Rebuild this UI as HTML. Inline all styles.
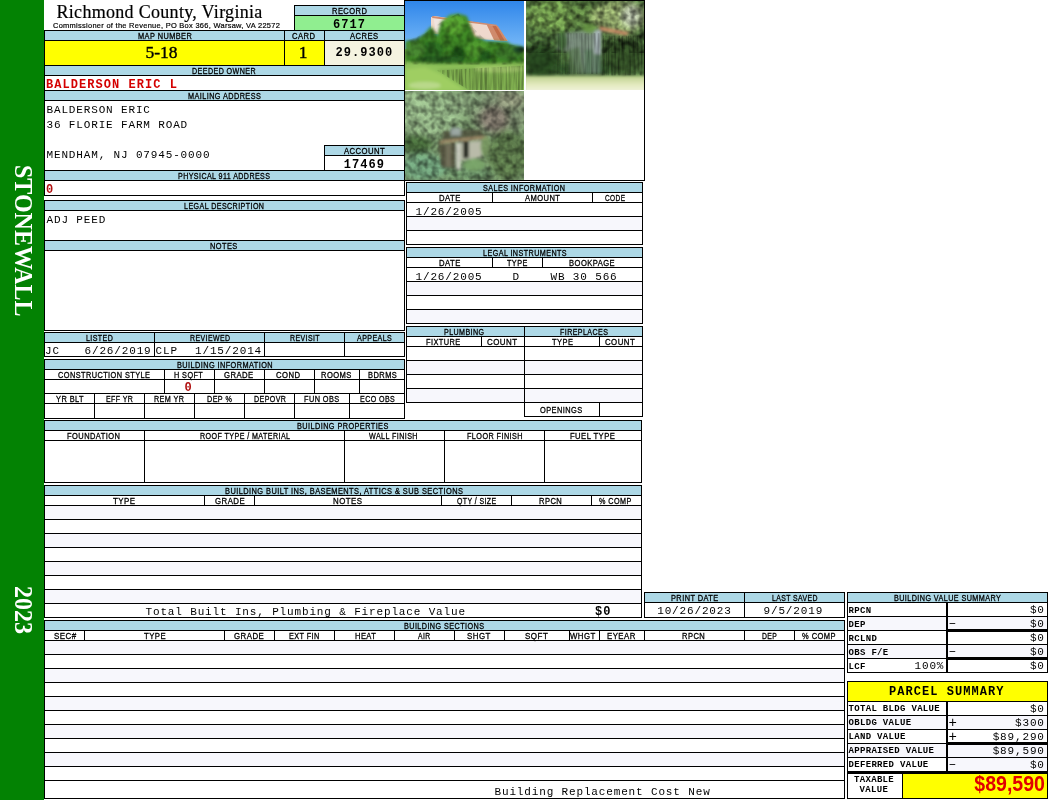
<!DOCTYPE html>
<html lang="en"><head><meta charset="utf-8"><title>Richmond County, Virginia - Property Card</title>
<style>
html,body{margin:0;padding:0;background:#fff;}
body{width:1050px;height:800px;position:relative;overflow:hidden;font-family:"Liberation Sans",sans-serif;}
#card{position:absolute;left:0;top:0;width:1050px;height:800px;will-change:transform;}
.b,.l,.t,.h,.side{position:absolute;}
.l{background:#000;}
.h{font:8.5px/10px "Liberation Sans",sans-serif;color:#000;white-space:pre;letter-spacing:0.5px;transform-origin:0 0;-webkit-text-stroke:0.3px #000;}
.t{white-space:pre;color:#000;}
.m{font:11px/14px "Liberation Mono",monospace;letter-spacing:0.85px;margin-top:2px;margin-left:-0.5px;}
.mb{font:bold 12px/14px "Liberation Mono",monospace;letter-spacing:1.05px;margin-top:2px;}
.sb{font:bold 9px/12px "Liberation Mono",monospace;letter-spacing:0.32px;margin-top:1px;}
.red{color:#d40000;}
.red2{color:#b01010;}
.ttl{font:18px/20px "Liberation Serif",serif;letter-spacing:0.3px;-webkit-text-stroke:0.2px #000;}
.sub{font:8px/10px "Liberation Sans",sans-serif;letter-spacing:0.3px;-webkit-text-stroke:0.2px #000;transform-origin:0 0;transform:scaleX(0.933);}
.big{font:17.5px/25px "Liberation Serif",serif;-webkit-text-stroke:0.4px #000;}
.tv{font:bold 21.5px/25px "Liberation Sans",sans-serif;color:#e00000;transform-origin:100% 0;transform:scaleX(0.91);}
.side{transform-origin:0 0;transform:scaleY(0.96);font:bold 25px/22px "Liberation Serif",serif;color:#fff;writing-mode:vertical-rl;white-space:nowrap;width:22px;}
</style></head>
<body>
<div id="card">
<div class="b" style="left:0px;top:0px;width:44px;height:800px;background:#038203"></div>
<div class="b" style="left:294px;top:5px;width:110px;height:10px;background:#add8e6"></div>
<div class="b" style="left:294px;top:15px;width:110px;height:15px;background:#90ee90"></div>
<div class="b" style="left:44px;top:30px;width:360px;height:10px;background:#add8e6"></div>
<div class="b" style="left:44px;top:40px;width:280px;height:25px;background:#ffff00"></div>
<div class="b" style="left:324px;top:40px;width:80px;height:25px;background:#f4f3e0"></div>
<div class="b" style="left:44px;top:65px;width:360px;height:10px;background:#add8e6"></div>
<div class="b" style="left:44px;top:91px;width:360px;height:9px;background:#add8e6"></div>
<div class="b" style="left:324px;top:145px;width:80px;height:10px;background:#add8e6"></div>
<div class="b" style="left:44px;top:170px;width:360px;height:10px;background:#add8e6"></div>
<div class="b" style="left:44px;top:200px;width:360px;height:10px;background:#add8e6"></div>
<div class="b" style="left:44px;top:240px;width:360px;height:10px;background:#add8e6"></div>
<div class="b" style="left:44px;top:332px;width:360px;height:10px;background:#add8e6"></div>
<div class="b" style="left:44px;top:359px;width:360px;height:10px;background:#add8e6"></div>
<div class="b" style="left:44px;top:420px;width:597px;height:10px;background:#add8e6"></div>
<div class="b" style="left:44px;top:485px;width:598px;height:10px;background:#add8e6"></div>
<div class="b" style="left:44px;top:506px;width:597px;height:13px;background:#f7f7fc"></div>
<div class="b" style="left:44px;top:534px;width:597px;height:13px;background:#f7f7fc"></div>
<div class="b" style="left:44px;top:562px;width:597px;height:13px;background:#f7f7fc"></div>
<div class="b" style="left:44px;top:590px;width:597px;height:13px;background:#f7f7fc"></div>
<div class="b" style="left:406px;top:182px;width:236px;height:10px;background:#add8e6"></div>
<div class="b" style="left:406px;top:217px;width:236px;height:13px;background:#f7f7fc"></div>
<div class="b" style="left:406px;top:247px;width:236px;height:10px;background:#add8e6"></div>
<div class="b" style="left:406px;top:282px;width:236px;height:13px;background:#f7f7fc"></div>
<div class="b" style="left:406px;top:310px;width:236px;height:13px;background:#f7f7fc"></div>
<div class="b" style="left:406px;top:326px;width:236px;height:10px;background:#add8e6"></div>
<div class="b" style="left:406px;top:361px;width:236px;height:13px;background:#f7f7fc"></div>
<div class="b" style="left:406px;top:389px;width:236px;height:13px;background:#f7f7fc"></div>
<div class="b" style="left:644px;top:592px;width:200px;height:10px;background:#add8e6"></div>
<div class="b" style="left:44px;top:620px;width:800px;height:10px;background:#add8e6"></div>
<div class="b" style="left:44px;top:641px;width:800px;height:13px;background:#f7f7fc"></div>
<div class="b" style="left:44px;top:669px;width:800px;height:13px;background:#f7f7fc"></div>
<div class="b" style="left:44px;top:697px;width:800px;height:13px;background:#f7f7fc"></div>
<div class="b" style="left:44px;top:725px;width:800px;height:13px;background:#f7f7fc"></div>
<div class="b" style="left:44px;top:753px;width:800px;height:13px;background:#f7f7fc"></div>
<div class="b" style="left:847px;top:592px;width:200px;height:10px;background:#add8e6"></div>
<div class="b" style="left:847px;top:617px;width:200px;height:13px;background:#f7f7fc"></div>
<div class="b" style="left:847px;top:645px;width:200px;height:13px;background:#f7f7fc"></div>
<div class="b" style="left:847px;top:681px;width:200px;height:20px;background:#ffff00"></div>
<div class="b" style="left:847px;top:716px;width:200px;height:13px;background:#f7f7fc"></div>
<div class="b" style="left:847px;top:744px;width:200px;height:13px;background:#f7f7fc"></div>
<div class="b" style="left:946px;top:758px;width:101px;height:13px;background:#f7f7fc"></div>
<div class="b" style="left:903px;top:774px;width:144px;height:24px;background:#ffff00"></div>
<div class="l" style="left:294px;top:5px;width:111px;height:1px"></div>
<div class="l" style="left:294px;top:15px;width:111px;height:1px"></div>
<div class="l" style="left:294px;top:5px;width:1px;height:26px"></div>
<div class="l" style="left:44px;top:30px;width:1px;height:166px"></div>
<div class="l" style="left:44px;top:200px;width:1px;height:131px"></div>
<div class="l" style="left:44px;top:332px;width:1px;height:25px"></div>
<div class="l" style="left:44px;top:359px;width:1px;height:60px"></div>
<div class="l" style="left:44px;top:420px;width:1px;height:63px"></div>
<div class="l" style="left:44px;top:485px;width:1px;height:133px"></div>
<div class="l" style="left:44px;top:620px;width:1px;height:179px"></div>
<div class="l" style="left:44px;top:30px;width:361px;height:1px"></div>
<div class="l" style="left:44px;top:40px;width:361px;height:1px"></div>
<div class="l" style="left:44px;top:65px;width:361px;height:1px"></div>
<div class="l" style="left:284px;top:30px;width:1px;height:36px"></div>
<div class="l" style="left:324px;top:30px;width:1px;height:36px"></div>
<div class="l" style="left:44px;top:75px;width:361px;height:1px"></div>
<div class="l" style="left:44px;top:90px;width:361px;height:1px"></div>
<div class="l" style="left:44px;top:100px;width:361px;height:1px"></div>
<div class="l" style="left:324px;top:145px;width:81px;height:1px"></div>
<div class="l" style="left:324px;top:155px;width:81px;height:1px"></div>
<div class="l" style="left:324px;top:145px;width:1px;height:26px"></div>
<div class="l" style="left:44px;top:170px;width:361px;height:1px"></div>
<div class="l" style="left:44px;top:180px;width:361px;height:1px"></div>
<div class="l" style="left:44px;top:195px;width:361px;height:1px"></div>
<div class="l" style="left:404px;top:0px;width:1px;height:196px"></div>
<div class="l" style="left:44px;top:200px;width:361px;height:1px"></div>
<div class="l" style="left:44px;top:210px;width:361px;height:1px"></div>
<div class="l" style="left:44px;top:240px;width:361px;height:1px"></div>
<div class="l" style="left:44px;top:250px;width:361px;height:1px"></div>
<div class="l" style="left:44px;top:330px;width:361px;height:1px"></div>
<div class="l" style="left:404px;top:200px;width:1px;height:131px"></div>
<div class="l" style="left:44px;top:332px;width:361px;height:1px"></div>
<div class="l" style="left:44px;top:342px;width:361px;height:1px"></div>
<div class="l" style="left:44px;top:356px;width:361px;height:1px"></div>
<div class="l" style="left:154px;top:332px;width:1px;height:25px"></div>
<div class="l" style="left:264px;top:332px;width:1px;height:25px"></div>
<div class="l" style="left:344px;top:332px;width:1px;height:25px"></div>
<div class="l" style="left:404px;top:332px;width:1px;height:25px"></div>
<div class="l" style="left:44px;top:359px;width:361px;height:1px"></div>
<div class="l" style="left:44px;top:369px;width:361px;height:1px"></div>
<div class="l" style="left:44px;top:379px;width:361px;height:1px"></div>
<div class="l" style="left:44px;top:393px;width:361px;height:1px"></div>
<div class="l" style="left:44px;top:403px;width:361px;height:1px"></div>
<div class="l" style="left:44px;top:418px;width:361px;height:1px"></div>
<div class="l" style="left:164px;top:369px;width:1px;height:25px"></div>
<div class="l" style="left:214px;top:369px;width:1px;height:25px"></div>
<div class="l" style="left:264px;top:369px;width:1px;height:25px"></div>
<div class="l" style="left:314px;top:369px;width:1px;height:25px"></div>
<div class="l" style="left:359px;top:369px;width:1px;height:25px"></div>
<div class="l" style="left:94px;top:393px;width:1px;height:26px"></div>
<div class="l" style="left:144px;top:393px;width:1px;height:26px"></div>
<div class="l" style="left:194px;top:393px;width:1px;height:26px"></div>
<div class="l" style="left:244px;top:393px;width:1px;height:26px"></div>
<div class="l" style="left:294px;top:393px;width:1px;height:26px"></div>
<div class="l" style="left:349px;top:393px;width:1px;height:26px"></div>
<div class="l" style="left:404px;top:359px;width:1px;height:60px"></div>
<div class="l" style="left:44px;top:420px;width:598px;height:1px"></div>
<div class="l" style="left:44px;top:430px;width:598px;height:1px"></div>
<div class="l" style="left:44px;top:440px;width:598px;height:1px"></div>
<div class="l" style="left:44px;top:482px;width:598px;height:1px"></div>
<div class="l" style="left:144px;top:430px;width:1px;height:53px"></div>
<div class="l" style="left:344px;top:430px;width:1px;height:53px"></div>
<div class="l" style="left:444px;top:430px;width:1px;height:53px"></div>
<div class="l" style="left:544px;top:430px;width:1px;height:53px"></div>
<div class="l" style="left:641px;top:430px;width:1px;height:53px"></div>
<div class="l" style="left:641px;top:420px;width:1px;height:63px"></div>
<div class="l" style="left:44px;top:485px;width:598px;height:1px"></div>
<div class="l" style="left:44px;top:495px;width:598px;height:1px"></div>
<div class="l" style="left:44px;top:505px;width:598px;height:1px"></div>
<div class="l" style="left:204px;top:495px;width:1px;height:11px"></div>
<div class="l" style="left:254px;top:495px;width:1px;height:11px"></div>
<div class="l" style="left:441px;top:495px;width:1px;height:11px"></div>
<div class="l" style="left:511px;top:495px;width:1px;height:11px"></div>
<div class="l" style="left:591px;top:495px;width:1px;height:11px"></div>
<div class="l" style="left:44px;top:519px;width:598px;height:1px"></div>
<div class="l" style="left:44px;top:533px;width:598px;height:1px"></div>
<div class="l" style="left:44px;top:547px;width:598px;height:1px"></div>
<div class="l" style="left:44px;top:561px;width:598px;height:1px"></div>
<div class="l" style="left:44px;top:575px;width:598px;height:1px"></div>
<div class="l" style="left:44px;top:589px;width:598px;height:1px"></div>
<div class="l" style="left:44px;top:603px;width:598px;height:1px"></div>
<div class="l" style="left:44px;top:617px;width:598px;height:1px"></div>
<div class="l" style="left:641px;top:485px;width:1px;height:133px"></div>
<div class="l" style="left:406px;top:182px;width:237px;height:1px"></div>
<div class="l" style="left:406px;top:192px;width:237px;height:1px"></div>
<div class="l" style="left:406px;top:202px;width:237px;height:1px"></div>
<div class="l" style="left:492px;top:192px;width:1px;height:11px"></div>
<div class="l" style="left:592px;top:192px;width:1px;height:11px"></div>
<div class="l" style="left:406px;top:216px;width:237px;height:1px"></div>
<div class="l" style="left:406px;top:230px;width:237px;height:1px"></div>
<div class="l" style="left:406px;top:244px;width:237px;height:1px"></div>
<div class="l" style="left:406px;top:182px;width:1px;height:63px"></div>
<div class="l" style="left:642px;top:182px;width:1px;height:63px"></div>
<div class="l" style="left:406px;top:247px;width:237px;height:1px"></div>
<div class="l" style="left:406px;top:257px;width:237px;height:1px"></div>
<div class="l" style="left:406px;top:267px;width:237px;height:1px"></div>
<div class="l" style="left:492px;top:257px;width:1px;height:11px"></div>
<div class="l" style="left:542px;top:257px;width:1px;height:11px"></div>
<div class="l" style="left:406px;top:281px;width:237px;height:1px"></div>
<div class="l" style="left:406px;top:295px;width:237px;height:1px"></div>
<div class="l" style="left:406px;top:309px;width:237px;height:1px"></div>
<div class="l" style="left:406px;top:323px;width:237px;height:1px"></div>
<div class="l" style="left:406px;top:247px;width:1px;height:77px"></div>
<div class="l" style="left:642px;top:247px;width:1px;height:77px"></div>
<div class="l" style="left:406px;top:326px;width:237px;height:1px"></div>
<div class="l" style="left:406px;top:336px;width:237px;height:1px"></div>
<div class="l" style="left:406px;top:346px;width:237px;height:1px"></div>
<div class="l" style="left:481px;top:336px;width:1px;height:11px"></div>
<div class="l" style="left:599px;top:336px;width:1px;height:11px"></div>
<div class="l" style="left:524px;top:326px;width:1px;height:91px"></div>
<div class="l" style="left:406px;top:360px;width:237px;height:1px"></div>
<div class="l" style="left:406px;top:374px;width:237px;height:1px"></div>
<div class="l" style="left:406px;top:388px;width:237px;height:1px"></div>
<div class="l" style="left:406px;top:402px;width:237px;height:1px"></div>
<div class="l" style="left:406px;top:326px;width:1px;height:77px"></div>
<div class="l" style="left:642px;top:326px;width:1px;height:91px"></div>
<div class="l" style="left:524px;top:416px;width:119px;height:1px"></div>
<div class="l" style="left:599px;top:402px;width:1px;height:15px"></div>
<div class="l" style="left:404px;top:0px;width:241px;height:1px"></div>
<div class="l" style="left:644px;top:0px;width:1px;height:181px"></div>
<div class="l" style="left:404px;top:180px;width:241px;height:1px"></div>
<div class="l" style="left:644px;top:592px;width:201px;height:1px"></div>
<div class="l" style="left:644px;top:602px;width:201px;height:1px"></div>
<div class="l" style="left:644px;top:617px;width:201px;height:1px"></div>
<div class="l" style="left:644px;top:592px;width:1px;height:26px"></div>
<div class="l" style="left:744px;top:592px;width:1px;height:26px"></div>
<div class="l" style="left:844px;top:592px;width:1px;height:26px"></div>
<div class="l" style="left:44px;top:620px;width:801px;height:1px"></div>
<div class="l" style="left:44px;top:630px;width:801px;height:1px"></div>
<div class="l" style="left:44px;top:640px;width:801px;height:1px"></div>
<div class="l" style="left:84px;top:630px;width:1px;height:11px"></div>
<div class="l" style="left:224px;top:630px;width:1px;height:11px"></div>
<div class="l" style="left:274px;top:630px;width:1px;height:11px"></div>
<div class="l" style="left:334px;top:630px;width:1px;height:11px"></div>
<div class="l" style="left:394px;top:630px;width:1px;height:11px"></div>
<div class="l" style="left:454px;top:630px;width:1px;height:11px"></div>
<div class="l" style="left:504px;top:630px;width:1px;height:11px"></div>
<div class="l" style="left:569px;top:630px;width:1px;height:11px"></div>
<div class="l" style="left:599px;top:630px;width:1px;height:11px"></div>
<div class="l" style="left:644px;top:630px;width:1px;height:11px"></div>
<div class="l" style="left:744px;top:630px;width:1px;height:11px"></div>
<div class="l" style="left:794px;top:630px;width:1px;height:11px"></div>
<div class="l" style="left:44px;top:654px;width:801px;height:1px"></div>
<div class="l" style="left:44px;top:668px;width:801px;height:1px"></div>
<div class="l" style="left:44px;top:682px;width:801px;height:1px"></div>
<div class="l" style="left:44px;top:696px;width:801px;height:1px"></div>
<div class="l" style="left:44px;top:710px;width:801px;height:1px"></div>
<div class="l" style="left:44px;top:724px;width:801px;height:1px"></div>
<div class="l" style="left:44px;top:738px;width:801px;height:1px"></div>
<div class="l" style="left:44px;top:752px;width:801px;height:1px"></div>
<div class="l" style="left:44px;top:766px;width:801px;height:1px"></div>
<div class="l" style="left:44px;top:780px;width:801px;height:1px"></div>
<div class="l" style="left:44px;top:798px;width:801px;height:1px"></div>
<div class="l" style="left:844px;top:620px;width:1px;height:179px"></div>
<div class="l" style="left:847px;top:592px;width:201px;height:1px"></div>
<div class="l" style="left:847px;top:602px;width:201px;height:1px"></div>
<div class="l" style="left:847px;top:616px;width:201px;height:1px"></div>
<div class="l" style="left:847px;top:630px;width:201px;height:1px"></div>
<div class="l" style="left:946px;top:629px;width:102px;height:3px"></div>
<div class="l" style="left:847px;top:644px;width:201px;height:1px"></div>
<div class="l" style="left:847px;top:658px;width:201px;height:1px"></div>
<div class="l" style="left:946px;top:657px;width:102px;height:3px"></div>
<div class="l" style="left:847px;top:672px;width:201px;height:1px"></div>
<div class="l" style="left:847px;top:592px;width:1px;height:81px"></div>
<div class="l" style="left:946px;top:602px;width:2px;height:71px"></div>
<div class="l" style="left:1047px;top:592px;width:1px;height:81px"></div>
<div class="l" style="left:847px;top:681px;width:201px;height:1px"></div>
<div class="l" style="left:847px;top:701px;width:201px;height:1px"></div>
<div class="l" style="left:847px;top:715px;width:201px;height:1px"></div>
<div class="l" style="left:847px;top:729px;width:201px;height:1px"></div>
<div class="l" style="left:847px;top:743px;width:201px;height:1px"></div>
<div class="l" style="left:847px;top:757px;width:201px;height:1px"></div>
<div class="l" style="left:847px;top:771px;width:201px;height:1px"></div>
<div class="l" style="left:946px;top:742px;width:102px;height:3px"></div>
<div class="l" style="left:847px;top:771px;width:201px;height:3px"></div>
<div class="l" style="left:847px;top:681px;width:1px;height:118px"></div>
<div class="l" style="left:946px;top:701px;width:2px;height:71px"></div>
<div class="l" style="left:1047px;top:681px;width:1px;height:118px"></div>
<div class="l" style="left:902px;top:772px;width:1px;height:27px"></div>
<div class="l" style="left:847px;top:798px;width:201px;height:1px"></div>
<div class="side" style="left:12px;top:165px;">STONEWALL</div>
<div class="side" style="left:12px;top:586px;">2023</div>
<div class="t ttl" style="left:56.5px;top:2px;">Richmond County, Virginia</div>
<div class="t sub" style="left:52.5px;top:20.5px;">Commissioner of the Revenue, PO Box 366, Warsaw, VA 22572</div>
<div class="h" style="left:332.4px;top:6px;height:9px;line-height:10px;transform:scaleX(0.885);">RECORD</div>
<div class="t mb" style="left:295px;top:16px;width:109px;text-align:center;">6717</div>
<div class="h" style="left:137.6px;top:31px;height:9px;line-height:10px;transform:scaleX(0.868);">MAP NUMBER</div>
<div class="h" style="left:291.6px;top:31px;height:9px;line-height:10px;transform:scaleX(0.899);">CARD</div>
<div class="h" style="left:349.6px;top:31px;height:9px;line-height:10px;transform:scaleX(0.895);">ACRES</div>
<div class="t big" style="left:42px;top:40px;width:239px;text-align:center;">5-18</div>
<div class="t big" style="left:283.5px;top:40px;width:39px;text-align:center;">1</div>
<div class="t mb" style="left:325px;top:44px;width:79px;text-align:center;">29.9300</div>
<div class="h" style="left:191.6px;top:66px;height:9px;line-height:10px;transform:scaleX(0.838);">DEEDED OWNER</div>
<div class="t mb red" style="left:46px;top:76px;">BALDERSON ERIC L</div>
<div class="h" style="left:187.6px;top:91px;height:9px;line-height:10px;transform:scaleX(0.857);">MAILING ADDRESS</div>
<div class="t m" style="left:47px;top:101px;">BALDERSON ERIC</div>
<div class="t m" style="left:47px;top:116px;">36 FLORIE FARM ROAD</div>
<div class="t m" style="left:47px;top:146px;">MENDHAM, NJ 07945-0000</div>
<div class="h" style="left:343.6px;top:146px;height:9px;line-height:10px;transform:scaleX(0.906);">ACCOUNT</div>
<div class="t mb" style="left:325px;top:156px;width:79px;text-align:center;">17469</div>
<div class="h" style="left:178.4px;top:171px;height:9px;line-height:10px;transform:scaleX(0.835);">PHYSICAL 911 ADDRESS</div>
<div class="t mb red2" style="left:46px;top:181px;">0</div>
<div class="h" style="left:183.6px;top:201px;height:9px;line-height:10px;transform:scaleX(0.837);">LEGAL DESCRIPTION</div>
<div class="t m" style="left:47px;top:211px;">ADJ PEED</div>
<div class="h" style="left:210.4px;top:241px;height:9px;line-height:10px;transform:scaleX(0.870);">NOTES</div>
<div class="h" style="left:86.4px;top:333px;height:9px;line-height:10px;transform:scaleX(0.831);">LISTED</div>
<div class="h" style="left:189.6px;top:333px;height:9px;line-height:10px;transform:scaleX(0.819);">REVIEWED</div>
<div class="h" style="left:289.6px;top:333px;height:9px;line-height:10px;transform:scaleX(0.821);">REVISIT</div>
<div class="h" style="left:356.8px;top:333px;height:9px;line-height:10px;transform:scaleX(0.834);">APPEALS</div>
<div class="t m" style="left:45.5px;top:341.5px;">JC</div>
<div class="t m" style="left:156px;top:341.5px;">CLP</div>
<div class="t m" style="left:85px;top:341.5px;">6/26/2019</div>
<div class="t m" style="left:195.5px;top:341.5px;">1/15/2014</div>
<div class="h" style="left:176.8px;top:360px;height:9px;line-height:10px;transform:scaleX(0.862);">BUILDING INFORMATION</div>
<div class="h" style="left:58.4px;top:370px;height:9px;line-height:10px;transform:scaleX(0.866);">CONSTRUCTION STYLE</div>
<div class="h" style="left:174.4px;top:370px;height:9px;line-height:10px;transform:scaleX(0.855);">H SQFT</div>
<div class="h" style="left:224.4px;top:370px;height:9px;line-height:10px;transform:scaleX(0.906);">GRADE</div>
<div class="h" style="left:276.4px;top:370px;height:9px;line-height:10px;transform:scaleX(0.905);">COND</div>
<div class="h" style="left:320.8px;top:370px;height:9px;line-height:10px;transform:scaleX(0.891);">ROOMS</div>
<div class="h" style="left:367.6px;top:370px;height:9px;line-height:10px;transform:scaleX(0.881);">BDRMS</div>
<div class="h" style="left:55.6px;top:394px;height:9px;line-height:10px;transform:scaleX(0.872);">YR BLT</div>
<div class="h" style="left:105.6px;top:394px;height:9px;line-height:10px;transform:scaleX(0.823);">EFF YR</div>
<div class="h" style="left:153.6px;top:394px;height:9px;line-height:10px;transform:scaleX(0.847);">REM YR</div>
<div class="h" style="left:206.8px;top:394px;height:9px;line-height:10px;transform:scaleX(0.848);">DEP %</div>
<div class="h" style="left:253.6px;top:394px;height:9px;line-height:10px;transform:scaleX(0.833);">DEPOVR</div>
<div class="h" style="left:304.4px;top:394px;height:9px;line-height:10px;transform:scaleX(0.863);">FUN OBS</div>
<div class="h" style="left:359.6px;top:394px;height:9px;line-height:10px;transform:scaleX(0.834);">ECO OBS</div>
<div class="t mb red2" style="left:184.5px;top:379px;">0</div>
<div class="h" style="left:296.9px;top:421px;height:9px;line-height:10px;transform:scaleX(0.860);">BUILDING PROPERTIES</div>
<div class="h" style="left:66.9px;top:431px;height:9px;line-height:10px;transform:scaleX(0.881);">FOUNDATION</div>
<div class="h" style="left:199.5px;top:431px;height:9px;line-height:10px;transform:scaleX(0.838);">ROOF TYPE / MATERIAL</div>
<div class="h" style="left:369.2px;top:431px;height:9px;line-height:10px;transform:scaleX(0.840);">WALL FINISH</div>
<div class="h" style="left:466.6px;top:431px;height:9px;line-height:10px;transform:scaleX(0.854);">FLOOR FINISH</div>
<div class="h" style="left:570.3px;top:431px;height:9px;line-height:10px;transform:scaleX(0.899);">FUEL TYPE</div>
<div class="h" style="left:224.6px;top:486px;height:9px;line-height:10px;transform:scaleX(0.873);">BUILDING BUILT INS, BASEMENTS, ATTICS &amp; SUB SECTIONS</div>
<div class="h" style="left:113.4px;top:496px;height:9px;line-height:10px;transform:scaleX(0.932);">TYPE</div>
<div class="h" style="left:214.6px;top:496px;height:9px;line-height:10px;transform:scaleX(0.921);">GRADE</div>
<div class="h" style="left:333.4px;top:496px;height:9px;line-height:10px;transform:scaleX(0.927);">NOTES</div>
<div class="h" style="left:456.6px;top:496px;height:9px;line-height:10px;transform:scaleX(0.818);">QTY / SIZE</div>
<div class="h" style="left:538.9px;top:496px;height:9px;line-height:10px;transform:scaleX(0.891);">RPCN</div>
<div class="h" style="left:598.6px;top:496px;height:9px;line-height:10px;transform:scaleX(0.849);">% COMP</div>
<div class="t m" style="left:146px;top:602.5px;">Total Built Ins, Plumbing &amp; Fireplace Value</div>
<div class="t mb" style="left:595px;top:603px;">$0</div>
<div class="h" style="left:482.5px;top:183px;height:9px;line-height:10px;transform:scaleX(0.849);">SALES INFORMATION</div>
<div class="h" style="left:439.2px;top:193px;height:9px;line-height:10px;transform:scaleX(0.905);">DATE</div>
<div class="h" style="left:524.7px;top:193px;height:9px;line-height:10px;transform:scaleX(0.887);">AMOUNT</div>
<div class="h" style="left:605.3px;top:193px;height:9px;line-height:10px;transform:scaleX(0.767);">CODE</div>
<div class="t m" style="left:416px;top:203px;">1/26/2005</div>
<div class="h" style="left:482.5px;top:248px;height:9px;line-height:10px;transform:scaleX(0.846);">LEGAL INSTRUMENTS</div>
<div class="h" style="left:439.2px;top:258px;height:9px;line-height:10px;transform:scaleX(0.905);">DATE</div>
<div class="h" style="left:506.8px;top:258px;height:9px;line-height:10px;transform:scaleX(0.856);">TYPE</div>
<div class="h" style="left:569.2px;top:258px;height:9px;line-height:10px;transform:scaleX(0.895);">BOOKPAGE</div>
<div class="t m" style="left:416px;top:268px;">1/26/2005</div>
<div class="t m" style="left:513px;top:268px;">D</div>
<div class="t m" style="left:551px;top:268px;">WB 30 566</div>
<div class="h" style="left:444.1px;top:327px;height:9px;line-height:10px;transform:scaleX(0.837);">PLUMBING</div>
<div class="h" style="left:559.5px;top:327px;height:9px;line-height:10px;transform:scaleX(0.834);">FIREPLACES</div>
<div class="h" style="left:426.2px;top:337px;height:9px;line-height:10px;transform:scaleX(0.871);">FIXTURE</div>
<div class="h" style="left:487.3px;top:337px;height:9px;line-height:10px;transform:scaleX(0.934);">COUNT</div>
<div class="h" style="left:551.7px;top:337px;height:9px;line-height:10px;transform:scaleX(0.882);">TYPE</div>
<div class="h" style="left:605.3px;top:337px;height:9px;line-height:10px;transform:scaleX(0.921);">COUNT</div>
<div class="h" style="left:540.3px;top:403px;height:13px;line-height:14px;transform:scaleX(0.870);">OPENINGS</div>
<svg class="ph" width="240" height="180" viewBox="0 0 240 180" style="position:absolute;left:405px;top:1px;overflow:hidden">
<defs>
<filter id="bl0" x="-20%" y="-20%" width="140%" height="140%"><feGaussianBlur stdDeviation="0.7"/></filter>
<filter id="bl1" x="-20%" y="-20%" width="140%" height="140%"><feGaussianBlur stdDeviation="1.4"/></filter>
<filter id="bl2" x="-20%" y="-20%" width="140%" height="140%"><feGaussianBlur stdDeviation="3"/></filter>
<filter id="nz" x="0" y="0" width="100%" height="100%">
<feTurbulence type="fractalNoise" baseFrequency="0.13" numOctaves="2" seed="7" result="n"/>
<feColorMatrix in="n" type="matrix" values="0 0 0 0 0  0 0 0 0 0  0 0 0 0 0  0 1.7 0 0 -0.6"/>
<feComposite in2="SourceGraphic" operator="in"/>
</filter>
<filter id="nzl" x="0" y="0" width="100%" height="100%">
<feTurbulence type="fractalNoise" baseFrequency="0.15" numOctaves="2" seed="23" result="n"/>
<feColorMatrix in="n" type="matrix" values="0 0 0 0 0  0 0 0 0 0  0 0 0 0 0  1.7 0 0 0 -0.6"/>
<feComposite in2="SourceGraphic" operator="in"/>
</filter>
<filter id="nzv" x="0" y="0" width="100%" height="100%">
<feTurbulence type="fractalNoise" baseFrequency="0.45 0.03" numOctaves="2" seed="5" result="n"/>
<feColorMatrix in="n" type="matrix" values="0 0 0 0 0  0 0 0 0 0  0 0 0 0 0  0 2.4 0 0 -0.9"/>
<feComposite in2="SourceGraphic" operator="in"/>
</filter>
<linearGradient id="sky" x1="0" y1="0" x2="0" y2="1"><stop offset="0" stop-color="#2f86ea"/><stop offset="1" stop-color="#7cbcf8"/></linearGradient>
<linearGradient id="gr2" x1="0" y1="0" x2="0" y2="1"><stop offset="0" stop-color="#bcd08c"/><stop offset="0.45" stop-color="#e4eabf"/><stop offset="1" stop-color="#f8f9ee"/></linearGradient>
<clipPath id="c1"><rect x="0" y="0" width="119" height="89"/></clipPath>
<clipPath id="c2"><rect x="121" y="0" width="118" height="89"/></clipPath>
<clipPath id="c3"><rect x="0" y="90" width="119" height="89"/></clipPath>
</defs>
<g clip-path="url(#c1)">
<rect x="0" y="0" width="119" height="50" fill="url(#sky)"/>
<rect x="0" y="48" width="119" height="41" fill="#8dbf58"/>
<g filter="url(#bl0)">
<polygon points="26.0,16.3 29.7,15.1 91.6,24.4 102.7,39.9 64.3,37.4 26.0,32.4" fill="#efd9cd" />
<polygon points="28.4,16.3 43.3,17.6 43.3,32.4 30.9,32.4" fill="#efe4de" />
<polygon points="81.7,23.8 92.8,25.0 102.7,39.9 89.1,39.2" fill="#cf8a6c" />
<polygon points="87.2,24.5 91.0,24.9 99.6,39.6 95.3,39.4" fill="#c06a48" />
<polygon points="27.2,15.1 91.6,23.8 92.2,25.2 27.2,17.0" fill="#cf8c70" />
<polygon points="59.4,22.5 66.8,23.5 71.8,37.4 65.6,36.8" fill="#e6bfae" />
</g><g filter="url(#bl1)">
<polygon points="0.2,39.9 11.1,38.6 19.8,32.4 26.0,25.0 32.1,34.9 35.9,21.3 44.5,13.9 53.2,12.6 61.9,15.1 65.0,23.8 69.3,34.9 81.7,39.9 101.5,40.5 106.4,43.6 118.8,45.4 118.8,63.4 0.2,63.4" fill="#3f8a26" />
<ellipse cx="49.5" cy="23.8" rx="11.1" ry="9.9" fill="#5aa832" />
<ellipse cx="71.8" cy="48.5" rx="11.1" ry="8.7" fill="#4f9a2d" />
<ellipse cx="26.0" cy="48.5" rx="13.6" ry="8.7" fill="#2f6f20" />
<ellipse cx="9.9" cy="48.5" rx="9.9" ry="7.4" fill="#4a8a30" />
<ellipse cx="53.2" cy="53.5" rx="7.4" ry="8.7" fill="#1f4f18" />
<ellipse cx="80.4" cy="54.7" rx="6.2" ry="6.2" fill="#235a1a" />
<ellipse cx="104.0" cy="52.2" rx="13.6" ry="7.4" fill="#3e7a2a" />
<ellipse cx="113.9" cy="48.5" rx="6.2" ry="3.1" fill="#1f4a2a" />
<ellipse cx="35.9" cy="58.4" rx="24.8" ry="3.7" fill="#2a6320" />
<polygon points="0.2,60.9 35.9,63.4 118.8,62.1 118.8,89.4 0.2,89.4" fill="#8fc25a" />
<polygon points="32.1,68.3 118.8,63.4 118.8,89.4 64.3,89.4" fill="#7fae50" />
<polygon points="0.2,68.3 19.8,65.9 35.9,73.3 59.4,89.4 0.2,89.4" fill="#9fce62" />
<ellipse cx="19.8" cy="84.4" rx="16.1" ry="3.7" fill="#b9d98a" />
<ellipse cx="94.0" cy="68.3" rx="24.8" ry="3.1" fill="#a2c86a" />
</g>
<polygon points="0.2,39.9 19.8,32.4 35.9,21.3 53.2,12.6 65.0,23.8 81.7,39.9 118.8,45.4 118.8,63.4 0.2,63.4" fill="#0e2c08" filter="url(#nz)" opacity="0.45"/>
<polygon points="32.1,69.6 118.8,64.6 118.8,89.4 64.3,89.4" fill="#3f6f28" filter="url(#nzv)" opacity="0.3"/>
</g>
<g clip-path="url(#c2)">
<rect x="121" y="0" width="118" height="89" fill="#5c8648"/>
<g filter="url(#bl2)">
<ellipse cx="147.2" cy="15.1" rx="28.5" ry="16.1" fill="#8fc262" />
<ellipse cx="179.4" cy="13.9" rx="18.6" ry="12.4" fill="#74a252" />
<ellipse cx="214.0" cy="16.3" rx="28.5" ry="17.3" fill="#b2ce82" />
<ellipse cx="226.4" cy="15.1" rx="9.9" ry="11.1" fill="#d0dcc0" />
<ellipse cx="136.0" cy="60.9" rx="18.6" ry="17.3" fill="#2a4e20" />
<ellipse cx="217.8" cy="54.7" rx="23.5" ry="18.6" fill="#3d5e2e" />
<ellipse cx="176.9" cy="68.3" rx="31.0" ry="7.4" fill="#33562a" />
</g>
<rect x="121" y="0" width="118" height="75.8" fill="#10260a" filter="url(#nz)" opacity="0.42"/>
<rect x="121" y="0" width="118" height="52.0" fill="#e6f6bc" filter="url(#nzl)" opacity="0.75"/>
<g filter="url(#bl1)">
<polygon points="152.1,33.0 189.3,28.7 196.1,29.3 196.1,72.0 173.2,73.3 164.5,51.0 152.1,48.5" fill="#7f9284" opacity="0.9"/>
<polygon points="189.3,28.7 196.1,29.3 196.1,53.5 189.3,52.2" fill="#a8b6b8" />
<polygon points="189.3,53.5 196.1,53.5 196.1,73.3 189.3,73.3" fill="#54765a" opacity="0.8"/>
<polygon points="163.3,48.5 174.4,46.0 179.4,73.3 164.5,73.3" fill="#5a7852" opacity="0.8"/>
<polygon points="179.4,48.5 188.0,48.5 188.0,73.3 179.4,73.3" fill="#587a5c" opacity="0.85"/>
<polygon points="194.2,25.6 224.0,31.4 221.5,34.3 195.5,29.3" fill="#d08c68" />
<ellipse cx="157.1" cy="39.9" rx="5.0" ry="9.9" fill="#3f6a30" opacity="0.8"/>
<ellipse cx="184.3" cy="27.5" rx="7.4" ry="5.0" fill="#6a9a44" opacity="0.8"/>
<rect x="119" y="74.8" width="122" height="20" fill="url(#gr2)"/>
</g>
<rect x="196.7" y="34.7" width="40.9" height="39.6" fill="#1a2a14" filter="url(#nzv)" opacity="0.4"/>
<rect x="152.1" y="32.2" width="43.3" height="40.9" fill="#2a3a28" filter="url(#nzv)" opacity="0.25"/>
</g>
<g clip-path="url(#c3)">
<rect x="0" y="90" width="119" height="89" fill="#88aa7a"/>
<g filter="url(#bl2)">
<ellipse cx="23.5" cy="110.5" rx="32.2" ry="24.8" fill="#a9cf9a" />
<ellipse cx="94.0" cy="111.8" rx="28.5" ry="23.5" fill="#8a9f7c" />
<ellipse cx="89.1" cy="118.0" rx="14.9" ry="13.6" fill="#90887a" />
<ellipse cx="106.4" cy="98.1" rx="13.6" ry="8.7" fill="#a8b090" />
<ellipse cx="102.7" cy="153.9" rx="21.0" ry="24.8" fill="#6c8e58" />
<ellipse cx="18.5" cy="166.2" rx="23.5" ry="13.6" fill="#80b88c" />
<ellipse cx="11.1" cy="142.7" rx="16.1" ry="9.9" fill="#527c44" />
<ellipse cx="64.3" cy="172.4" rx="24.8" ry="7.4" fill="#7aa676" />
<ellipse cx="59.4" cy="100.6" rx="18.6" ry="9.9" fill="#98b88a" />
</g>
<rect x="0" y="90" width="119" height="89" fill="#1c3016" filter="url(#nz)" opacity="0.26"/>
<rect x="0" y="90" width="119" height="89" fill="#ecf8dc" filter="url(#nzl)" opacity="0.6"/>
<g filter="url(#bl1)">
<polygon points="38.3,129.7 75.5,128.5 80.4,135.3 37.1,139.6" fill="#4a4a3a" opacity="0.8"/>
<polygon points="45.8,126.6 55.7,126.6 55.7,134.7 45.8,134.7" fill="#a9b6b4" opacity="0.85"/>
<polygon points="34.6,140.0 81.7,135.0 82.7,137.3 34.6,142.2" fill="#ab8c6a" />
<polygon points="33.4,143.3 50.7,142.1 50.7,166.2 36.5,166.2" fill="#4f4a3a" opacity="0.85"/>
<polygon points="51.3,142.1 55.4,141.7 55.4,168.7 51.7,168.7" fill="#d2d2c8" />
<polygon points="55.7,141.5 76.7,139.6 76.7,155.7 55.7,160.0" fill="#b9bba9" />
<polygon points="58.1,140.5 63.8,140.0 63.8,157.0 58.1,157.6" fill="#22271f" />
<polygon points="40.8,143.3 45.8,143.0 45.8,166.2 40.8,166.2" fill="#77735f" opacity="0.9"/>
<ellipse cx="69.3" cy="163.8" rx="11.1" ry="6.2" fill="#7aa66a" opacity="0.9"/>
<ellipse cx="80.4" cy="145.2" rx="5.0" ry="9.9" fill="#7a9a62" opacity="0.8"/>
</g>
</g>
</svg>
<div class="h" style="left:671.2px;top:593px;height:9px;line-height:10px;transform:scaleX(0.870);">PRINT DATE</div>
<div class="h" style="left:771.6px;top:593px;height:9px;line-height:10px;transform:scaleX(0.812);">LAST SAVED</div>
<div class="t m" style="left:657.7px;top:602px;">10/26/2023</div>
<div class="t m" style="left:764px;top:602px;">9/5/2019</div>
<div class="h" style="left:403.7px;top:621px;height:9px;line-height:10px;transform:scaleX(0.851);">BUILDING SECTIONS</div>
<div class="h" style="left:53.6px;top:631px;height:9px;line-height:10px;transform:scaleX(0.936);">SEC#</div>
<div class="h" style="left:143.5px;top:631px;height:9px;line-height:10px;transform:scaleX(0.911);">TYPE</div>
<div class="h" style="left:234.0px;top:631px;height:9px;line-height:10px;transform:scaleX(0.924);">GRADE</div>
<div class="h" style="left:289.4px;top:631px;height:9px;line-height:10px;transform:scaleX(0.855);">EXT FIN</div>
<div class="h" style="left:354.7px;top:631px;height:9px;line-height:10px;transform:scaleX(0.888);">HEAT</div>
<div class="h" style="left:417.6px;top:631px;height:9px;line-height:10px;transform:scaleX(0.798);">AIR</div>
<div class="h" style="left:466.6px;top:631px;height:9px;line-height:10px;transform:scaleX(0.931);">SHGT</div>
<div class="h" style="left:525.1px;top:631px;height:9px;line-height:10px;transform:scaleX(0.943);">SQFT</div>
<div class="h" style="left:570.3px;top:631px;height:9px;line-height:10px;transform:scaleX(0.921);">WHGT</div>
<div class="h" style="left:606.8px;top:631px;height:9px;line-height:10px;transform:scaleX(0.921);">EYEAR</div>
<div class="h" style="left:682.4px;top:631px;height:9px;line-height:10px;transform:scaleX(0.891);">RPCN</div>
<div class="h" style="left:761.6px;top:631px;height:9px;line-height:10px;transform:scaleX(0.801);">DEP</div>
<div class="h" style="left:801.6px;top:631px;height:9px;line-height:10px;transform:scaleX(0.886);">% COMP</div>
<div class="t m" style="left:495px;top:782.5px;">Building Replacement Cost New</div>
<div class="h" style="left:894.4px;top:593px;height:9px;line-height:10px;transform:scaleX(0.848);">BUILDING VALUE SUMMARY</div>
<div class="t sb" style="left:848.5px;top:604px;">RPCN</div>
<div class="t m" style="left:948px;top:601px;width:97.3px;text-align:right;">$0</div>
<div class="t sb" style="left:848.5px;top:618px;">DEP</div>
<div class="t m" style="left:949px;top:614.5px;font-size:13px;letter-spacing:0;">–</div>
<div class="t m" style="left:948px;top:615px;width:97.3px;text-align:right;">$0</div>
<div class="t sb" style="left:848.5px;top:632px;">RCLND</div>
<div class="t m" style="left:948px;top:629px;width:97.3px;text-align:right;">$0</div>
<div class="t sb" style="left:848.5px;top:646px;">OBS F/E</div>
<div class="t m" style="left:949px;top:642.5px;font-size:13px;letter-spacing:0;">–</div>
<div class="t m" style="left:948px;top:643px;width:97.3px;text-align:right;">$0</div>
<div class="t sb" style="left:848.5px;top:660px;">LCF</div>
<div class="t m" style="left:948px;top:657px;width:97.3px;text-align:right;">$0</div>
<div class="t m" style="left:915px;top:657px;">100%</div>
<div class="t mb" style="left:889px;top:683px;">PARCEL SUMMARY</div>
<div class="t sb" style="left:848.5px;top:702px;">TOTAL BLDG VALUE</div>
<div class="t m" style="left:948px;top:700px;width:97.3px;text-align:right;">$0</div>
<div class="t sb" style="left:848.5px;top:716px;">OBLDG VALUE</div>
<div class="t m" style="left:949px;top:713.5px;font-size:14px;letter-spacing:0;">+</div>
<div class="t m" style="left:948px;top:714px;width:97.3px;text-align:right;">$300</div>
<div class="t sb" style="left:848.5px;top:730px;">LAND VALUE</div>
<div class="t m" style="left:949px;top:727.5px;font-size:14px;letter-spacing:0;">+</div>
<div class="t m" style="left:948px;top:728px;width:97.3px;text-align:right;">$89,290</div>
<div class="t sb" style="left:848.5px;top:744px;">APPRAISED VALUE</div>
<div class="t m" style="left:948px;top:742px;width:97.3px;text-align:right;">$89,590</div>
<div class="t sb" style="left:848.5px;top:758px;">DEFERRED VALUE</div>
<div class="t m" style="left:949px;top:755.5px;font-size:13px;letter-spacing:0;">–</div>
<div class="t m" style="left:948px;top:756px;width:97.3px;text-align:right;">$0</div>
<div class="t sb" style="left:854px;top:773px;">TAXABLE</div>
<div class="t sb" style="left:859.5px;top:782.5px;">VALUE</div>
<div class="t tv" style="left:903px;top:771.5px;width:142px;text-align:right;">$89,590</div>
</div>
</body></html>
